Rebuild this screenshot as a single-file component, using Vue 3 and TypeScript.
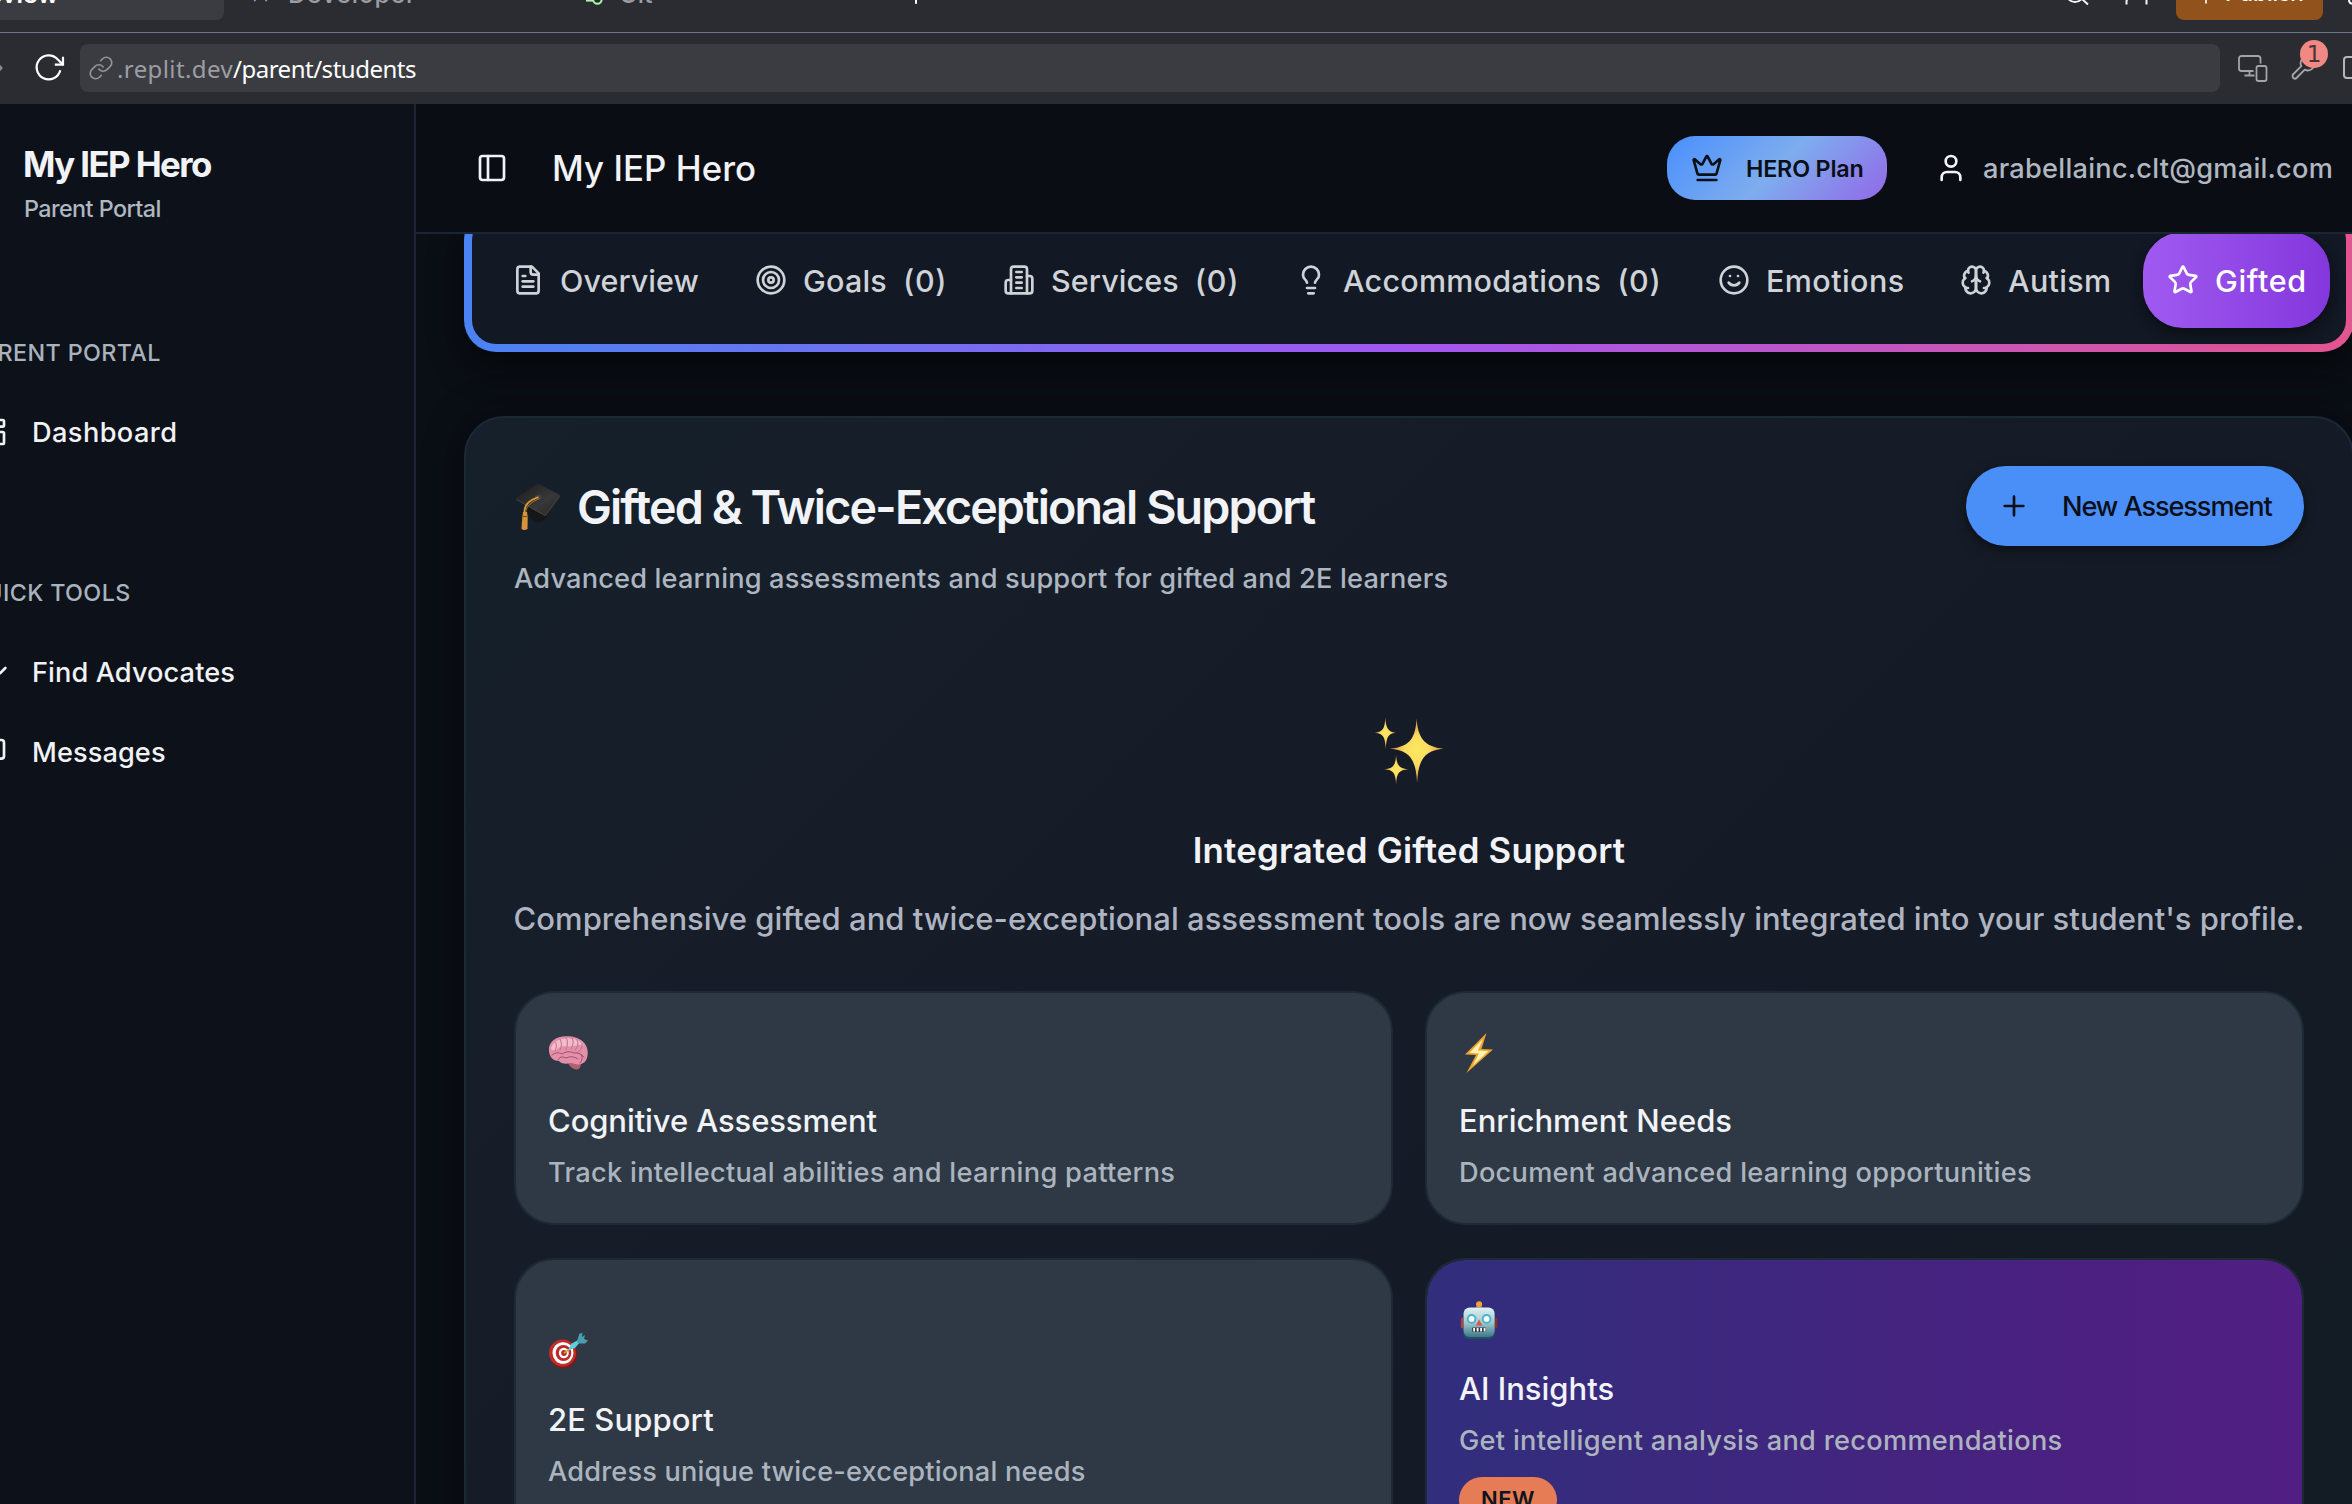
<script setup lang="ts">
interface Tab {
  label: string
  count?: string
  width: number
  spacing: number
  paths: string[]
  circles?: number[][]
  active?: boolean
}

interface Feature {
  kind: 'brain' | 'bolt' | 'target' | 'robot'
  title: string
  titleSpacing: number
  text: string
  textSpacing: number
  badge?: string
}

const tabs: Tab[] = [
  {
    label: 'Overview', width: 243, spacing: 0.05,
    paths: ['M15 2H6a2 2 0 0 0-2 2v16a2 2 0 0 0 2 2h12a2 2 0 0 0 2-2V7Z', 'M14 2v4a2 2 0 0 0 2 2h4', 'M10 9H8', 'M16 13H8', 'M16 17H8'],
  },
  { label: 'Goals', count: '(0)', width: 248, spacing: 0.2, paths: [], circles: [[12, 12, 10], [12, 12, 6], [12, 12, 2]] },
  {
    label: 'Services', count: '(0)', width: 292, spacing: 0.1,
    paths: ['M6 22V4a2 2 0 0 1 2-2h8a2 2 0 0 1 2 2v18Z', 'M6 12H4a2 2 0 0 0-2 2v6a2 2 0 0 0 2 2h2', 'M18 9h2a2 2 0 0 1 2 2v9a2 2 0 0 1-2 2h-2', 'M10 6h4', 'M10 10h4', 'M10 14h4', 'M10 18h4'],
  },
  {
    label: 'Accommodations', count: '(0)', width: 423, spacing: 0.22,
    paths: ['M15 14c.2-1 .7-1.7 1.5-2.5 1-.9 1.5-2.2 1.5-3.5A6 6 0 0 0 6 8c0 1 .2 2.2 1.5 3.5.7.7 1.3 1.5 1.5 2.5', 'M9 18h6', 'M10 22h4'],
  },
  { label: 'Emotions', width: 242, spacing: 0.42, paths: ['M8 14s1.5 2 4 2 4-2 4-2', 'M9 9h.01', 'M15 9h.01'], circles: [[12, 12, 10]] },
  {
    label: 'Autism', width: 207, spacing: 0.3,
    paths: [
      'M12 5a3 3 0 1 0-5.997.125 4 4 0 0 0-2.526 5.77 4 4 0 0 0 .556 6.588A4 4 0 1 0 12 18Z',
      'M12 5a3 3 0 1 1 5.997.125 4 4 0 0 1 2.526 5.77 4 4 0 0 1-.556 6.588A4 4 0 1 1 12 18Z',
      'M15 13a4.5 4.5 0 0 1-3-4 4.5 4.5 0 0 1-3 4',
      'M17.599 6.5a3 3 0 0 0 .399-1.375', 'M6.003 5.125A3 3 0 0 0 6.401 6.5',
      'M3.477 10.896a4 4 0 0 1 .585-.396', 'M19.938 10.5a4 4 0 0 1 .585.396',
      'M6 18a4 4 0 0 1-1.967-.516', 'M19.967 17.484A4 4 0 0 1 18 18',
    ],
  },
  {
    label: 'Gifted', width: 187, spacing: 0.65, active: true,
    paths: ['M11.525 2.295a.53.53 0 0 1 .95 0l2.31 4.679a2.123 2.123 0 0 0 1.595 1.16l5.166.756a.53.53 0 0 1 .294.904l-3.736 3.638a2.123 2.123 0 0 0-.611 1.878l.882 5.14a.53.53 0 0 1-.771.56l-4.618-2.428a2.122 2.122 0 0 0-1.973 0L6.396 21.01a.53.53 0 0 1-.77-.56l.881-5.139a2.122 2.122 0 0 0-.611-1.879L2.16 9.795a.53.53 0 0 1 .294-.906l5.165-.755a2.122 2.122 0 0 0 1.597-1.16z'],
  },
]

const features: Feature[] = [
  { kind: 'brain', title: 'Cognitive Assessment', titleSpacing: -0.1, text: 'Track intellectual abilities and learning patterns', textSpacing: 0.3 },
  { kind: 'bolt', title: 'Enrichment Needs', titleSpacing: 0, text: 'Document advanced learning opportunities', textSpacing: 0.26 },
  { kind: 'target', title: '2E Support', titleSpacing: 0.1, text: 'Address unique twice-exceptional needs', textSpacing: 0.17 },
  { kind: 'robot', title: 'AI Insights', titleSpacing: 0, text: 'Get intelligent analysis and recommendations', textSpacing: 0.29, badge: 'NEW' },
]
</script>

<template>
  <div class="screen">
    <header class="chrome">
      <div class="strip">
        <div class="strip-active"><span>Preview</span></div>
        <svg class="dev-icon" width="20" height="20" viewBox="0 0 20 20"><path d="M4 -4L5 1.2M17 -4L16 1.2" stroke="#6f9fd8" stroke-width="2" fill="none" /></svg>
        <span class="strip-label dev">Developer</span>
        <svg class="git-icon" width="22" height="20" viewBox="0 0 22 20"><path d="M2 .6H10" stroke="#a9f5a9" stroke-width="2" /><circle cx="13.4" cy="-.4" r="4.2" fill="none" stroke="#a9f5a9" stroke-width="2" /></svg>
        <span class="strip-label git">Git</span>
        <svg class="plus-icon" width="20" height="20" viewBox="0 0 20 20"><path d="M10 -6V3.8" stroke="#fff" stroke-width="2" /></svg>
        <svg class="search-icon" width="26" height="20" viewBox="0 0 26 20"><circle cx="9" cy="-7" r="9" fill="none" stroke="#f5f5f5" stroke-width="2" /><path d="M15 -2L22 4.6" stroke="#f5f5f5" stroke-width="2" /></svg>
        <svg class="invite-icon" width="26" height="20" viewBox="0 0 26 20"><path d="M2.500 4.500V1.500Q2.500 0 4 -2M22.500 4.500V-4" fill="none" stroke="#f5f5f5" stroke-width="2" /></svg>
        <div class="publish">
          <svg width="20" height="20" viewBox="0 0 20 20"><path d="M10 -6V3.600" stroke="#f5dcc4" stroke-width="2" /></svg>
          <span>Publish</span>
        </div>
        <svg class="edge-icon" width="8" height="20" viewBox="0 0 8 20"><path d="M2 -4V0q0 4 5 4" fill="none" stroke="#f5f5f5" stroke-width="2" /></svg>
      </div>
      <div class="address">
        <svg class="forward" width="4" height="12" viewBox="0 0 4 12"><path d="M-3 1L1.500 6L-3 11" fill="none" stroke="#8b8c91" stroke-width="2" /></svg>
        <svg class="reload" width="32" height="32" viewBox="0 0 32 32" fill="none" stroke="#fff" stroke-width="2.200">
          <path d="M26.300 18.200A12 12 0 1 1 23.600 7.300L29 12.600" /><path d="M29 4.800V12.700H20.800" />
        </svg>
        <div class="url">
          <svg width="26" height="26" viewBox="0 0 24 24" fill="none" stroke="#929398" stroke-width="1.500" stroke-linecap="round" stroke-linejoin="round">
            <path d="M10 13a5 5 0 0 0 7.540.540l3-3a5 5 0 0 0-7.070-7.070l-1.720 1.710" /><path d="M14 11a5 5 0 0 0-7.540-.540l-3 3a5 5 0 0 0 7.070 7.070l1.710-1.710" />
          </svg>
          <span class="host">.replit.dev</span><span class="path">/parent/students</span>
        </div>
        <svg class="devices" width="30" height="27" viewBox="0 0 30 27" fill="none" stroke="#a3a4a8" stroke-width="1.800">
          <path d="M15.500 16H3.500a2.500 2.500 0 0 1-2.500-2.500V3.500a2.500 2.500 0 0 1 2.500-2.500H20a2.500 2.500 0 0 1 2.500 2.500V8.500" />
          <path d="M11.500 16V20.500M6.500 20.500H16.500" /><rect x="18.500" y="11" width="10" height="15" rx="2" />
        </svg>
        <div class="wrench">
          <svg width="28" height="28" viewBox="0 0 24 24" fill="none" stroke="#a3a4a8" stroke-width="1.600" stroke-linejoin="round">
            <path d="M14.700 6.300a1 1 0 0 0 0 1.400l1.600 1.600a1 1 0 0 0 1.400 0l3.770-3.770a6 6 0 0 1-7.940 7.940l-6.910 6.910a2.120 2.120 0 0 1-3-3l6.910-6.910a6 6 0 0 1 7.940-7.940l-3.760 3.760z" />
          </svg>
          <span class="count">1</span>
        </div>
        <svg class="panel-edge" width="10" height="24" viewBox="0 0 10 24"><rect x="1" y="1" width="24" height="21" rx="3" fill="none" stroke="#b5b6ba" stroke-width="2" /></svg>
      </div>
    </header>

    <div class="app">
      <aside class="side">
        <h1 class="brand">My IEP Hero</h1>
        <p class="portal">Parent Portal</p>
        <h3 class="group first">PARENT PORTAL</h3>
        <a class="item">
          <svg class="ico" viewBox="0 0 24 24"><rect x="3" y="3" width="7" height="9" rx="1" /><rect x="14" y="3" width="7" height="5" rx="1" /><rect x="14" y="12" width="7" height="9" rx="1" /><rect x="3" y="16" width="7" height="5" rx="1" /></svg>
          <span class="s-dash">Dashboard</span>
        </a>
        <h3 class="group second">QUICK TOOLS</h3>
        <a class="item">
          <svg class="ico" viewBox="0 0 24 24"><path d="M16 21v-2a4 4 0 0 0-4-4H6a4 4 0 0 0-4 4v2" /><circle cx="9" cy="7" r="4" /><path d="M16 11l2 2 4-4" /></svg>
          <span>Find Advocates</span>
        </a>
        <a class="item last">
          <svg class="ico" viewBox="0 0 24 24"><path d="M21 15a2 2 0 0 1-2 2H7l-4 4V5a2 2 0 0 1 2-2h14a2 2 0 0 1 2 2z" /></svg>
          <span>Messages</span>
        </a>
      </aside>

      <main class="main">
        <div class="bar">
          <svg class="ico" viewBox="0 0 24 24"><rect x="3" y="3" width="18" height="18" rx="2" /><path d="M9 3v18" /></svg>
          <span class="title">My IEP Hero</span>
          <div class="hero">
            <svg class="ico" viewBox="0 0 24 24"><path d="M11.562 3.266a.5.5 0 0 1 .876 0L15.390 8.870a1 1 0 0 0 1.516.294L21.183 5.500a.5.5 0 0 1 .798.519l-2.834 10.246a1 1 0 0 1-.956.734H5.810a1 1 0 0 1-.957-.734L2.020 6.020a.5.5 0 0 1 .798-.519l4.276 3.664a1 1 0 0 0 1.516-.294z" /><path d="M5 21h14" /></svg>
            <span>HERO Plan</span>
          </div>
          <svg class="ico" viewBox="0 0 24 24"><path d="M19 21v-2a4 4 0 0 0-4-4H9a4 4 0 0 0-4 4v2" /><circle cx="12" cy="7" r="4" /></svg>
          <span class="mail">arabellainc.clt@gmail.com</span>
        </div>

        <div class="content">
          <div class="tab-frame">
            <nav class="tabs">
              <div v-for="t in tabs" :key="t.label" class="tab" :class="{ active: t.active }" :style="{ width: t.width + 'px' }">
                <svg class="ico" viewBox="0 0 24 24">
                  <circle v-for="(c, i) in t.circles || []" :key="'c' + i" :cx="c[0]" :cy="c[1]" :r="c[2]" />
                  <path v-for="(p, i) in t.paths" :key="i" :d="p" />
                </svg>
                <span class="tab-label" :style="{ letterSpacing: t.spacing + 'px' }">{{ t.label }}</span>
                <span v-if="t.count" class="tab-count">{{ t.count }}</span>
              </div>
            </nav>
          </div>

          <section class="card">
            <div class="card-head">
              <div class="head-text">
                <div class="head-title">
                  <svg width="48" height="48" viewBox="0 0 48 48">
                    <defs>
                      <linearGradient id="cap" x1="0" y1="0" x2="1" y2="1"><stop offset="0" stop-color="#1b1a1a" /><stop offset=".6" stop-color="#393838" /><stop offset="1" stop-color="#232223" /></linearGradient>
                    </defs>
                    <path d="M14 20L14 29C15 37 24 42 30 37C35 33 38 26 37 21Z" fill="#161617" />
                    <path d="M23 1Q24 .500 25 1L45.500 12Q46.500 13 45.500 14L33 32Q31.500 33.500 30 32.500L2 17Q1 16 2 15Z" fill="url(#cap)" />
                    <path d="M2.500 16.500L31 32.500L45.500 13.500" fill="none" stroke="#4a4847" stroke-width=".8" />
                    <ellipse cx="24.500" cy="14" rx="3.500" ry="2.500" fill="#3f4143" />
                    <path d="M24.500 14C17 17 10 20 10.500 30" fill="none" stroke="#dc9b34" stroke-width="1.800" />
                    <path d="M25.500 15.500C18 19 12.500 22 11.500 30" fill="none" stroke="#a86f1f" stroke-width="1" />
                    <path d="M9 29h4l.7 5L13.500 46Q10.500 48 7.500 46L8.300 34Z" fill="#d8923a" />
                    <path d="M8.400 33.500h5" stroke="#8a5419" stroke-width="1.200" />
                  </svg>
                  <h2>Gifted &amp; Twice-Exceptional Support</h2>
                </div>
                <p class="sub">Advanced learning assessments and support for gifted and 2E learners</p>
              </div>
              <button class="new-btn">
                <svg class="ico" viewBox="0 0 24 24"><path d="M5 12h14M12 5v14" /></svg>
                <span>New Assessment</span>
              </button>
            </div>

            <div class="intro">
              <svg width="72" height="72" viewBox="0 0 72 72">
                <defs>
                  <radialGradient id="spark"><stop offset="0" stop-color="#fde85e" /><stop offset=".45" stop-color="#fbdc62" /><stop offset="1" stop-color="#d98a3c" /></radialGradient>
                </defs>
                <g transform="translate(.8 0)" fill="url(#spark)">
                  <path d="M42.800 4.500C44 23 50 33 70 34.700C50 36.500 44.500 46 43.300 69C42 46 37 36.500 16 34.700C37 33 41.700 23 42.800 4.500Z" />
                  <path d="M11.500 3.500C12.300 14 14 18 22 18.700C14 19.600 12.700 23 12 35C11 23 10 19.600 1 18.700C9.700 18 10.800 14 11.500 3.500Z" />
                  <path d="M22.300 41C23 51 25 54.500 34.500 55.200C25 56 23 59 22.300 70C21.500 59 20 56 10.500 55.200C20 54.500 21.500 51 22.300 41Z" />
                </g>
              </svg>
              <h3>Integrated Gifted Support</h3>
              <p>Comprehensive gifted and twice-exceptional assessment tools are now seamlessly integrated into your student's profile.</p>
            </div>

            <div class="grid">
              <article v-for="f in features" :key="f.title" class="feature" :class="f.kind">
                <div class="emoji">
                  <svg v-if="f.kind === 'brain'" width="40" height="40" viewBox="0 0 40 40">
                    <path d="M19 28C21 33 25 37 29 36.500C32 36 33 33 33 30Z" fill="#b2606b" />
                    <path d="M1 18C0 9 8 3 19 3.300C31 3 39.500 10 39.700 19C40 26 37 31 31 31.500C28 32 26 30 22 30C18 31.500 13 30.500 11 28C5 28 1.500 24 1 18Z" fill="#e391ab" />
                    <path d="M3 16C4 9 11 5.500 19 5.500C27 5 33 8 36 13C30 10 24 15 16 13C10 13 8 20 3 16Z" fill="#f3bccb" />
                    <g fill="none" stroke="#c06f8d" stroke-width="1" stroke-linecap="round">
                      <path d="M7 9Q10 12 7 18M12 6Q15 11 12 17M18 4.500Q21 9 18 17M24 5Q27 9 23 16M29 7Q32 12 27 17M34 11Q35 16 29 20" />
                      <path d="M4 22Q9 18 14 21Q20 17 26 20Q31 19 36 24M10 27Q12 22 18 25Q24 22 30 26M33 21Q36 26 32 30" stroke="#a84f70" />
                    </g>
                  </svg>
                  <svg v-else-if="f.kind === 'bolt'" width="40" height="40" viewBox="0 0 40 40">
                    <path d="M27.500 0L6 21.500L17 22L7.500 40L34 16.500L22.500 16Z" fill="#f0a12f" />
                    <path d="M24 6L10.500 19.800L20 20.500L13.500 33L29.500 18L19 17.500Z" fill="#fff3ae" />
                  </svg>
                  <svg v-else-if="f.kind === 'target'" width="40" height="40" viewBox="0 0 40 40">
                    <ellipse cx="15.500" cy="22.500" rx="13.800" ry="14" fill="#7c1a1a" />
                    <ellipse cx="14.500" cy="21" rx="13.500" ry="13.500" fill="#c42b28" />
                    <ellipse cx="15" cy="21" rx="10.500" ry="10.800" fill="#fff" />
                    <ellipse cx="15.500" cy="21" rx="7.800" ry="8" fill="#b92b28" />
                    <ellipse cx="15.800" cy="21" rx="5" ry="5.200" fill="#fff" />
                    <ellipse cx="16" cy="21" rx="2.800" ry="3" fill="#b92b28" />
                    <path d="M16 21L22 17" stroke="#d8a52c" stroke-width="1.600" />
                    <path d="M20 18.500L23 12L31 7.500L32 10L27 16Z" fill="#5fd0da" />
                    <path d="M29 9L31.500 1.500L34.500 1L34 5L37 3L36 7L40 8.500L37 11.500L30 11.500Z" fill="#4a9fae" />
                  </svg>
                  <svg v-else width="40" height="40" viewBox="0 0 40 40">
                    <defs>
                      <linearGradient id="bot" x1="0" y1="0" x2="0" y2="1"><stop offset="0" stop-color="#e0f1f3" /><stop offset=".5" stop-color="#a3c9cf" /><stop offset="1" stop-color="#39798a" /></linearGradient>
                    </defs>
                    <g transform="translate(.6 -.6)">
                      <rect x="16" y="5" width="7" height="5" rx="2" fill="#6b5b86" />
                      <circle cx="19.500" cy="3.800" r="3" fill="#f2a531" />
                      <rect x="1.200" y="17" width="5" height="11" rx="2" fill="#b8403a" />
                      <rect x="32.800" y="17" width="5" height="11" rx="2" fill="#8c2f30" />
                      <rect x="3.500" y="7.500" width="32" height="31" rx="6" fill="#234f60" />
                      <rect x="4" y="7.200" width="31" height="29.500" rx="6" fill="url(#bot)" />
                      <circle cx="12" cy="18.500" r="4.800" fill="#44b2cc" /><circle cx="12" cy="18.500" r="2.900" fill="#fff" />
                      <circle cx="27" cy="18.500" r="4.800" fill="#44b2cc" /><circle cx="27" cy="18.500" r="2.900" fill="#fff" />
                      <path d="M19.500 19L22.700 25H16.300Z" fill="#e0524d" />
                      <rect x="12.500" y="27" width="14" height="4.600" rx="1" fill="#323a40" />
                      <path d="M14.500 27.500v3.600M18 27.500v3.600M21.500 27.500v3.600M25 27.500v3.600" stroke="#fff" stroke-width="1.800" />
                    </g>
                  </svg>
                </div>
                <h4 :style="{ letterSpacing: f.titleSpacing + 'px' }">{{ f.title }}</h4>
                <p :style="{ letterSpacing: f.textSpacing + 'px' }">{{ f.text }}</p>
                <span v-if="f.badge" class="badge">{{ f.badge }}</span>
              </article>
            </div>
          </section>
        </div>
      </main>
    </div>
  </div>
</template>

<style>
body { background: #0a0e15; }
</style>

<style scoped>
* { box-sizing: border-box; }
h1, h2, h3, h4, p { margin: 0; }
span { white-space: nowrap; }

.screen {
  width: 2352px;
  height: 1504px;
  display: flex;
  flex-direction: column;
  overflow: hidden;
  background: #0a0e15;
  color: #f1f3f7;
  font-family: Inter, "Liberation Sans", sans-serif;
}

.ico {
  width: 32px;
  height: 32px;
  flex: none;
  fill: none;
  stroke: currentColor;
  stroke-width: 2;
  stroke-linecap: round;
  stroke-linejoin: round;
}

/* editor chrome */
.chrome { flex: none; height: 104px; background: #2b2c31; overflow: hidden; }
.strip { height: 33px; display: flex; align-items: flex-start; border-bottom: 1px solid #6d768a; font-size: 25px; line-height: 28px; }
.strip svg { flex: none; }
.strip-active { flex: none; width: 224px; height: 20px; background: #3b3c41; border-radius: 0 0 8px 0; font-weight: 600; color: #fff; }
.strip-active span { display: block; margin: -20px 0 0 -38px; }
.dev-icon { margin-left: 26px; }
.strip-label { flex: none; margin-top: -20px; font-weight: 500; color: #9c9da2; }
.dev { margin-left: 18px; width: 129px; letter-spacing: 0.7px; }
.git-icon { margin-left: 167px; }
.git { margin-left: 13px; width: 40px; }
.plus-icon { margin-left: 247px; }
.search-icon { margin-left: 1140px; }
.invite-icon { margin-left: 32px; }
.publish { flex: none; margin-left: 26px; width: 147px; height: 20px; display: flex; background: #92521b; border-radius: 0 0 8px 8px; color: #fff; font-size: 22.5px; font-weight: 500; }
.publish svg { margin-left: 20px; }
.publish span { margin: -21px 0 0 9px; }
.edge-icon { margin-left: 24px; }

.address { height: 71px; display: flex; align-items: center; padding-bottom: 1px; }
.address > svg { flex: none; }
.reload { margin-left: 30px; }
.url { flex: none; margin-left: 14px; width: 2140px; height: 48px; padding-left: 8px; display: flex; align-items: center; border-radius: 8px; background: #3b3c41; font: 24px/48px "Noto Sans", sans-serif; }
.host { margin-left: 3px; width: 116px; padding-top: 1px; color: #9d9ea3; letter-spacing: 0.4px; }
.path { padding-top: 1px; color: #fff; letter-spacing: -0.49px; }
.devices { margin-left: 18px; }
.wrench { position: relative; flex: none; margin-left: 21px; width: 28px; height: 28px; }
.wrench svg { display: block; }
.count { position: absolute; left: 11px; top: -14px; width: 28px; height: 28px; border-radius: 50%; background: #f08884; color: #4d3336; font: 23px/28px "DejaVu Sans", sans-serif; text-align: center; }
.panel-edge { margin-left: 26px; }

/* page */
.app { flex: none; height: 1400px; display: flex; }
.side { flex: none; width: 416px; height: 1400px; padding: 40px 0 0 24px; background: #0d1119; border-right: 2px solid #1b2535; }
.brand { font-size: 34.8px; font-weight: 700; line-height: 40px; letter-spacing: -1.57px; margin-left: -1px; }
.portal { margin-top: 9px; font-size: 23.3px; line-height: 32px; font-weight: 450; letter-spacing: -0.55px; color: #afb7c1; }
.group { margin-left: -57px; font-size: 23.3px; line-height: 32px; font-weight: 500; letter-spacing: 0.4px; color: #a9b2bd; white-space: nowrap; }
.first { margin-top: 112px; }
.second { margin-top: 113px; }
.item { display: flex; align-items: center; height: 64px; margin-left: -48px; font-size: 27.2px; font-weight: 500; letter-spacing: 0.08px; color: #f0f2f6; }
.first + .item, .second + .item { margin-top: 31px; }
.item span { margin-left: 24px; }
.s-dash { letter-spacing: 0.4px; }
.last { margin-top: 16px; }

.main { flex: none; width: 1938px; height: 1400px; overflow: hidden; }
.bar { position: relative; z-index: 2; height: 130px; display: flex; align-items: center; padding: 0 0 0 60px; background: #0a0d14; border-bottom: 2px solid #1a2532; }
.title { flex: none; width: 1115px; margin-left: 44px; font-size: 34.8px; font-weight: 500; letter-spacing: 0.05px; }
.hero { flex: none; width: 220px; height: 64px; margin-right: 48px; padding-left: 24px; display: flex; align-items: center; border-radius: 28px; background: linear-gradient(135deg, #488ffc 0%, #7eadee 50%, #9268e8 100%); color: #0a0f18; font-size: 23.3px; font-weight: 600; letter-spacing: -0.18px; }
.hero span { margin-left: 23px; }
.mail { margin-left: 16px; font-size: 27.2px; font-weight: 450; letter-spacing: 0.25px; color: #afb7c1; }

.content { padding: 0 0 0 48px; }
.tab-frame { width: 1890px; height: 144px; margin-top: -26px; padding: 8px; border-radius: 32px; background: linear-gradient(90deg, #4a83f3 0%, #a157f0 50%, #e2558f 100%); box-shadow: 0 16px 32px rgba(0, 0, 0, 0.5); }
.tabs { height: 128px; padding: 16px; display: flex; border-radius: 24px; background: #121824; }
.tab { flex: none; height: 96px; padding-left: 24px; display: flex; align-items: center; font-size: 30.5px; font-weight: 500; color: #cfd3d8; }
.tab-label { margin-left: 16px; }
.tab-count { margin-left: 16px; letter-spacing: 0.7px; }
.active { border-radius: 40px; background: linear-gradient(90deg, #a05af0, #8437dc); color: #fff; box-shadow: 0 6px 14px rgba(0, 0, 0, 0.45); }

.card { width: 1890px; height: 1300px; margin-top: 64px; padding: 48px; border: 2px solid #1b2835; border-radius: 40px; background: linear-gradient(135deg, #15202b 0%, #161d28 26%, #151b26 60%, #121b24 100%); box-shadow: 0 0 40px rgba(0, 0, 0, 0.35); }
.card-head { display: flex; justify-content: space-between; align-items: flex-start; }
.head-text { padding-top: 9px; }
.head-title { display: flex; align-items: center; height: 64px; }
h2 { margin-left: 15px; font-size: 46.6px; font-weight: 600; letter-spacing: -1.87px; white-space: nowrap; }
.sub { margin-top: 20px; font-size: 27.2px; line-height: 40px; font-weight: 450; letter-spacing: 0.17px; color: #adb5c0; white-space: nowrap; }
.new-btn { width: 338px; height: 80px; padding: 0 0 0 32px; display: flex; align-items: center; border: 0; border-radius: 40px; background: #4a8ef8; color: #0a0f18; font-family: inherit; font-size: 27.2px; font-weight: 500; letter-spacing: -1.12px; box-shadow: 0 4px 12px rgba(0, 0, 0, 0.5); }
.new-btn span { margin-left: 32px; }

.intro { display: flex; flex-direction: column; align-items: center; margin-top: 115px; }
.intro h3 { margin-top: 40px; font-size: 34.8px; line-height: 48px; font-weight: 600; letter-spacing: 0.21px; }
.intro p { margin-top: 21px; font-size: 31px; line-height: 48px; font-weight: 450; letter-spacing: 0.02px; color: #aeb4c1; white-space: nowrap; }

.grid { margin-top: 48px; display: grid; grid-template-columns: 879px 879px; grid-template-rows: 234px 298px; column-gap: 32px; row-gap: 33px; }
.feature { padding: 2px 32px 0; display: flex; flex-direction: column; justify-content: center; align-items: flex-start; border: 2px solid #1c2a36; border-radius: 40px; background: #2e3945; }
.robot { background: linear-gradient(90deg, #312e7c, #4b2080 75%, #511f83); background-clip: padding-box; }
.emoji { height: 56px; display: flex; align-items: center; }
h4 { margin: 18px 0 0; font-size: 31px; line-height: 44px; font-weight: 500; white-space: nowrap; }
.feature p { margin-top: 10px; font-size: 27.2px; line-height: 40px; font-weight: 450; color: #abb4be; white-space: nowrap; }
.badge { margin-top: 16px; width: 98px; height: 46px; border-radius: 23px; background: #e67c56; color: #10141c; font-size: 22px; line-height: 44px; font-weight: 600; letter-spacing: 0.5px; text-align: center; }
</style>
